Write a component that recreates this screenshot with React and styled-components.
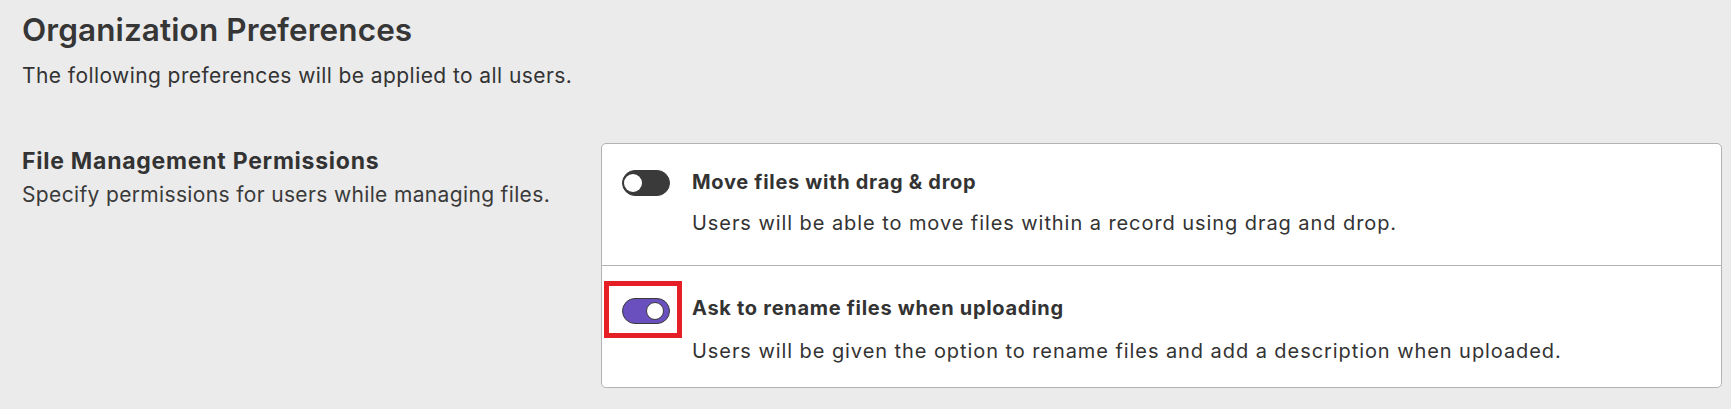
import React from "react";
import styled, { createGlobalStyle } from "styled-components";

const Global = createGlobalStyle`
  html, body { margin: 0; padding: 0; background: #ebebeb; }
  body { font-family: "Inter", "Noto Sans", sans-serif; color: #333333; }
`;

const Page = styled.div`
  padding: 12px 9px 0 22px;
`;

const Title = styled.h1`
  margin: 0;
  font-size: 31.5px;
  line-height: 36px;
  font-weight: 600;
  letter-spacing: 0.1px;
  color: #363636;
`;

const Subtitle = styled.p`
  margin: 16px 0 0;
  font-size: 21px;
  line-height: 24px;
  letter-spacing: 0.42px;
  color: #333;
`;

const Section = styled.section`
  display: grid;
  grid-template-columns: 579px 1fr;
  margin-top: 55px;
`;

const SectionInfo = styled.div`
  padding-top: 4px;
`;

const SectionTitle = styled.h2`
  margin: 0;
  font-size: 23px;
  line-height: 28px;
  font-weight: 700;
  letter-spacing: 0.75px;
  color: #333;
`;

const SectionText = styled.p`
  margin: 8px 0 0;
  font-size: 21px;
  line-height: 24px;
  letter-spacing: 0.35px;
  color: #3a3a3a;
`;

const Card = styled.div`
  background: #fff;
  border: 1px solid #b3b3b3;
  border-radius: 5px;
  overflow: hidden;
  padding-bottom: 1px;
`;

const Row = styled.div`
  display: grid;
  grid-template-columns: 48px 1fr;
  column-gap: 22px;
  row-gap: 14px;
  align-items: center;
  align-content: start;
  height: 121px;
  box-sizing: border-box;
  padding: ${(p) => p.$top}px 20px 0 20px;
  border-top: ${(p) => (p.$divider ? "1px solid #b3b3b3" : "none")};
`;

const ToggleWrap = styled.div`
  position: relative;
  width: 48px;
  height: 26px;
`;

const Track = styled.div`
  box-sizing: border-box;
  width: 48px;
  height: 26px;
  border-radius: 13px;
  background: ${(p) => (p.$on ? "#6a50bf" : "#3a3a3a")};
  border: 1px solid #3a3a3a;
  display: flex;
  align-items: center;
  justify-content: ${(p) => (p.$on ? "flex-end" : "flex-start")};
  padding: ${(p) => (p.$on ? "0 5px 0 0" : "0 0 0 1px")};
`;

const Knob = styled.div`
  box-sizing: border-box;
  width: 18px;
  height: 18px;
  border-radius: 50%;
  background: #fff;
  border: ${(p) => (p.$on ? "1px solid #3a3a3a" : "none")};
`;

const Highlight = styled.div`
  position: absolute;
  left: -18px;
  top: -17px;
  width: 78px;
  height: 57px;
  box-sizing: border-box;
  border: 5px solid #e61e25;
  pointer-events: none;
`;

const OptionTitle = styled.div`
  font-size: 20px;
  font-weight: 700;
  line-height: 26px;
  letter-spacing: 0.7px;
  color: #333;
  transform: translateY(${(p) => p.$shift || 0}px);
`;

const OptionText = styled.div`
  grid-column: 2;
  font-size: 20px;
  line-height: 26px;
  letter-spacing: 0.93px;
  color: #333;
`;

function Toggle({ on, highlighted }) {
  return (
    <ToggleWrap>
      <Track $on={on}>
        <Knob $on={on} />
      </Track>
      {highlighted && <Highlight />}
    </ToggleWrap>
  );
}

export default function App() {
  return (
    <>
      <Global />
      <Page>
        <Title>Organization Preferences</Title>
        <Subtitle>The following preferences will be applied to all users.</Subtitle>
        <Section>
          <SectionInfo>
            <SectionTitle>File Management Permissions</SectionTitle>
            <SectionText>Specify permissions for users while managing files.</SectionText>
          </SectionInfo>
          <Card>
            <Row $top={26}>
              <Toggle on={false} />
              <OptionTitle $shift={-1}>Move files with drag &amp; drop</OptionTitle>
              <OptionText>Users will be able to move files within a record using drag and drop.</OptionText>
            </Row>
            <Row $top={32} $divider>
              <Toggle on highlighted />
              <OptionTitle $shift={-3}>Ask to rename files when uploading</OptionTitle>
              <OptionText>Users will be given the option to rename files and add a description when uploaded.</OptionText>
            </Row>
          </Card>
        </Section>
      </Page>
    </>
  );
}
